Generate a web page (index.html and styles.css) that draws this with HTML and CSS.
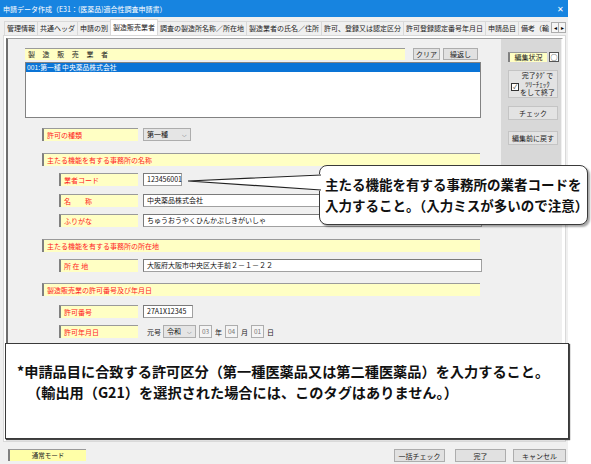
FILE: index.html
```html
<!DOCTYPE html>
<html lang="ja">
<head>
    <meta charset="UTF-8">
    <title>申請データ作成</title>
    <link rel="stylesheet" href="styles.css">
</head>
<body>

<div class="window">
    <!-- Title bar -->
    <div class="titlebar">
        <span class="title">申請データ作成（E31：(医薬品)適合性調査申請書）</span>
        <span class="close">✕</span>
    </div>

    <!-- Tabs -->
    <div class="tabs">
        <div class="tab-list">
            <div class="tab">管理情報</div>
            <div class="tab">共通ヘッダ</div>
            <div class="tab">申請の別</div>
            <div class="tab active">製造販売業者</div>
            <div class="tab">調査の製造所名称／所在地</div>
            <div class="tab">製造業者の氏名／住所</div>
            <div class="tab">許可、登録又は認定区分</div>
            <div class="tab">許可登録認定番号年月日</div>
            <div class="tab">申請品目</div>
            <div class="tab">備考（輸</div>
        </div>
        <div class="tab-arrows">
            <span class="arrow">◂</span><span class="arrow">▸</span>
        </div>
    </div>

    <!-- Tab page -->
    <div class="tabpage">
        <div class="panel">
            <div class="main">
                <div class="mfr-head">
                    <div class="mfr-title">製造販売業者</div>
                    <button class="btn btn-clear">クリア</button>
                    <button class="btn btn-repeat">繰返し</button>
                </div>
                <div class="mfr-list">
                    <div class="list-row selected">001:第一種 中央薬品株式会社</div>
                </div>

                <div class="form">
                    <div class="field first">
                        <div class="label">許可の種類</div>
                        <div class="select select-kind">第一種<span class="chev">⌵</span></div>
                    </div>

                    <div class="section">主たる機能を有する事務所の名称</div>
                    <div class="field sub gap7">
                        <div class="label">業者コード</div>
                        <div class="input input-code">123456001</div>
                    </div>
                    <div class="field sub gap8">
                        <div class="label">名　　称</div>
                        <div class="input input-wide">中央薬品株式会社</div>
                    </div>
                    <div class="field sub gap7">
                        <div class="label">ふりがな</div>
                        <div class="input input-wide">ちゅうおうやくひんかぶしきがいしゃ</div>
                    </div>

                    <div class="section">主たる機能を有する事務所の所在地</div>
                    <div class="field sub gap7">
                        <div class="label">所 在 地</div>
                        <div class="input input-wide">大阪府大阪市中央区大手前２－１－２２</div>
                    </div>

                    <div class="section sec-permit">製造販売業の許可番号及び年月日</div>
                    <div class="field sub gap9">
                        <div class="label">許可番号</div>
                        <div class="input input-permit">27A1X12345</div>
                    </div>
                    <div class="field sub gap7">
                        <div class="label">許可年月日</div>
                        <span class="date-text era-text">元号</span>
                        <div class="select select-era">令和<span class="chev">⌵</span></div>
                        <div class="num">03</div><span class="date-text">年</span>
                        <div class="num">04</div><span class="date-text">月</span>
                        <div class="num">01</div><span class="date-text">日</span>
                    </div>
                </div>
            </div>

            <!-- Right side panel -->
            <div class="side">
                <div class="edit-status">
                    <div class="status-label">編集状況</div>
                    <div class="status-mark">○</div>
                </div>
                <button class="side-btn finish-btn">
                    <span class="check-box">✓</span>
                    <span class="finish-text">完了ﾀｸﾞで<br>ﾂﾘｰﾁｪｯｸ<br>をして終了</span>
                </button>
                <button class="side-btn btn-check">チェック</button>
                <button class="side-btn btn-revert">編集前に戻す</button>
            </div>
        </div>
    </div>

    <!-- Status bar -->
    <div class="statusbar">
        <div class="mode">通常モード</div>
        <button class="btn bottom-btn">一括チェック</button>
        <button class="btn bottom-btn btn-done">完了</button>
        <button class="btn bottom-btn btn-cancel">キャンセル</button>
    </div>

    <!-- Callouts -->
    <svg class="pointer" width="140" height="22" viewBox="0 0 140 22">
        <polygon points="2,9 137,2 137,19" fill="#fff"/>
        <polyline points="135,3 2,9 135,18" fill="none" stroke="#222" stroke-width="1.2"/>
    </svg>
    <div class="note note-code">
        主たる機能を有する事務所の業者コードを<br>入力すること。（入力ミスが多いので注意）
    </div>
    <div class="note note-kubun">
        <div class="note-line">*申請品目に合致する許可区分（第一種医薬品又は第二種医薬品）を入力すること。</div>
        <div class="note-line indent">（輸出用（G21）を選択された場合には、このタグはありません。）</div>
    </div>
</div>

</body>
</html>
```

FILE: styles.css
```css
body {
    margin: 0;
    background-color: #fff;
    font-family: "Noto Sans CJK JP", sans-serif;
    width: 591px;
    height: 464px;
    overflow: hidden;
}
.window {
    position: relative;
    width: 568px;
    height: 464px;
    background-color: #f0f0f0;
    display: flex;
    flex-direction: column;
}
/* Title bar */
.titlebar {
    height: 17px;
    background-color: #1784e0;
    color: white;
    display: flex;
    align-items: center;
    justify-content: space-between;
    padding: 0 4px 0 3px;
}
.title {
    font-size: 7px;
}
.close {
    font-size: 8px;
}
/* Tabs */
.tabs {
    height: 18px;
    display: flex;
    align-items: flex-end;
    padding-left: 4px;
}
.tab-list {
    flex: 1;
    display: flex;
    align-items: flex-end;
    overflow: hidden;
    white-space: nowrap;
}
.tab {
    height: 13px;
    line-height: 13px;
    font-size: 7px;
    padding: 0 2px;
    border: 1px solid #d9d9d9;
    border-bottom: none;
    margin-right: -1px;
    color: #222;
    background-color: #f0f0f0;
}
.tab.active {
    height: 15px;
    line-height: 15px;
    background-color: #fff;
    position: relative;
    z-index: 1;
}
.tab-arrows {
    display: flex;
    margin: 0 2px 2px 2px;
}
.arrow {
    width: 6px;
    height: 9px;
    line-height: 9px;
    font-size: 6px;
    text-align: center;
    border: 1px solid #adadad;
    background-color: #f5f5f5;
    margin-left: -1px;
}
/* Tab page */
.tabpage {
    height: 401px;
    margin: 0 2px 0 3px;
    background-color: #fff;
    border: 1px solid #d9d9d9;
    padding: 2px;
}
.panel {
    height: 399px;
    background-color: #f0f0f0;
    border-top: 1px solid #a0a0a0;
    border-left: 2px solid #6d6d6d;
    border-right: 1px solid #fff;
    border-bottom: 1px solid #fff;
    display: flex;
}
.main {
    flex: 1;
    padding: 9px 0 0 17px;
}
.mfr-head {
    display: flex;
    align-items: center;
    height: 12px;
}
.mfr-title {
    width: 377px;
    height: 11px;
    line-height: 11px;
    padding-left: 3px;
    background-color: #ffffc4;
    border-top: 1px solid #9a9a9a;
    font-size: 7px;
    letter-spacing: 7.6px;
    color: #222;
}
.btn {
    font-family: "Noto Sans CJK JP", sans-serif;
    font-size: 7px;
    color: #222;
    background-color: #e1e1e1;
    border: 1px solid #adadad;
    height: 12px;
    padding: 0;
    line-height: 10px;
}
.btn-clear {
    margin-left: 8px;
    width: 27px;
}
.btn-repeat {
    margin-left: 3px;
    width: 35px;
}
.mfr-list {
    margin-top: 2px;
    width: 454px;
    height: 54px;
    background-color: #fff;
    border: 1px solid #828282;
}
.list-row {
    height: 9px;
    line-height: 9px;
    font-size: 6.8px;
    padding-left: 1px;
}
.list-row.selected {
    background-color: #0a74d6;
    color: #fff;
}
/* Form */
.form {
    padding-left: 17px;
}
.field {
    display: flex;
    align-items: center;
    height: 13px;
}
.field.first {
    margin-top: 10px;
}
.field.sub {
    padding-left: 17px;
}
.gap7 { margin-top: 7px; }
.gap8 { margin-top: 8px; }
.gap9 { margin-top: 9px; }
.label {
    width: 91px;
    height: 12px;
    line-height: 12px;
    padding-left: 3px;
    background-color: #ffffc4;
    border-top: 1px solid #9a9a9a;
    border-left: 2px solid #808080;
    color: #f22;
    font-size: 7px;
}
.field.sub .label {
    width: 74px;
}
.section {
    margin-top: 12px;
    width: 433px;
    height: 12px;
    line-height: 12px;
    padding-left: 3px;
    background-color: #ffffc4;
    border-top: 1px solid #9a9a9a;
    border-left: 2px solid #808080;
    color: #f22;
    font-size: 7px;
}
.section.sec-permit {
    margin-top: 11px;
}
.input {
    margin-left: 5px;
    height: 11px;
    line-height: 11px;
    padding-left: 3px;
    background-color: #fff;
    border: 1px solid #a0a0a0;
    border-top-color: #7a7a7a;
    border-left-color: #7a7a7a;
    font-size: 7px;
    color: #111;
}
.input-code {
    width: 34px;
}
.input-wide {
    width: 334px;
}
.input-permit {
    width: 45px;
}
.select {
    margin-left: 5px;
    height: 11px;
    line-height: 11px;
    padding-left: 3px;
    background-color: #e5e5e5;
    border: 1px solid #adadad;
    font-size: 7px;
    color: #111;
    display: flex;
    justify-content: space-between;
}
.select-kind {
    width: 43px;
}
.select-era {
    margin-left: 2px;
    width: 28px;
}
.chev {
    font-size: 6px;
    color: #555;
    padding-right: 3px;
}
.date-text {
    font-size: 7px;
    color: #222;
    margin-left: 3px;
}
.era-text {
    margin-left: 9px;
}
.num {
    margin-left: 3px;
    width: 11px;
    height: 11px;
    line-height: 11px;
    text-align: center;
    background-color: #f4f4f4;
    border: 1px solid #adadad;
    font-size: 6.5px;
    color: #777;
}
/* Side panel */
.side {
    width: 53px;
    height: 112px;
    margin-right: 1px;
    padding: 13px 0 6px 7px;
    background-color: #d8d8d8;
    display: flex;
    flex-direction: column;
}
.edit-status {
    display: flex;
    height: 10px;
}
.status-label {
    width: 37px;
    height: 9px;
    line-height: 9px;
    text-align: center;
    background-color: #ffffc4;
    border-top: 1px solid #9a9a9a;
    border-left: 2px solid #808080;
    font-size: 7px;
    color: #222;
}
.status-mark {
    margin-left: 2px;
    width: 8px;
    height: 8px;
    line-height: 8px;
    text-align: center;
    background-color: #fff;
    border: 1px solid #555;
    font-size: 7px;
}
.side-btn {
    font-family: "Noto Sans CJK JP", sans-serif;
    width: 50px;
    padding: 0;
    background-color: #e3e3e3;
    border: 1px solid #c4c4c4;
    font-size: 7px;
    color: #222;
}
.finish-btn {
    margin-top: 8px;
    height: 28px;
    display: flex;
    align-items: center;
    justify-content: center;
}
.check-box {
    width: 6px;
    height: 6px;
    line-height: 6px;
    font-size: 6px;
    border: 1px solid #333;
    background-color: #fff;
    margin: 5px 1px 0 0;
}
.finish-text {
    font-size: 7px;
    line-height: 8.5px;
    text-align: center;
}
.btn-check {
    margin-top: 8px;
    height: 14px;
}
.btn-revert {
    margin-top: 11px;
    height: 14px;
}
/* Status bar */
.statusbar {
    flex: 1;
    display: flex;
    align-items: flex-start;
    padding: 7px 2px 0 8px;
}
.mode {
    width: 76px;
    height: 11px;
    line-height: 11px;
    text-align: center;
    background-color: #ffffa8;
    border-top: 1px solid #9a9a9a;
    border-left: 2px solid #808080;
    font-size: 6.5px;
    color: #222;
}
.bottom-btn {
    width: 51px;
    height: 13px;
    margin-left: 10px;
}
.statusbar .bottom-btn:first-of-type {
    margin-left: auto;
}
.btn-cancel {
    width: 53px;
    margin-left: 7px;
}
/* Callouts */
.pointer {
    position: absolute;
    left: 186px;
    top: 172px;
    z-index: 3;
}
.note {
    position: absolute;
    background-color: #fff;
    color: #111;
    z-index: 2;
}
.note-code {
    left: 319px;
    top: 165px;
    width: 262px;
    height: 50px;
    padding: 8px 0 0 5px;
    border: 1px solid #3a3a3a;
    border-radius: 8px;
    box-shadow: 2px 2px 2px rgba(0, 0, 0, 0.35);
    font-size: 13.5px;
    font-weight: bold;
    line-height: 21px;
    white-space: nowrap;
}
.note-kubun {
    left: 5px;
    top: 343px;
    width: 551px;
    height: 77px;
    padding: 17px 0 0 11px;
    border: 1px solid #3a3a3a;
    box-shadow: 1px 1px 1px #444;
    font-size: 14.2px;
    font-weight: bold;
    line-height: 21px;
    white-space: nowrap;
}
.note-line.indent {
    padding-left: 10px;
}
```
